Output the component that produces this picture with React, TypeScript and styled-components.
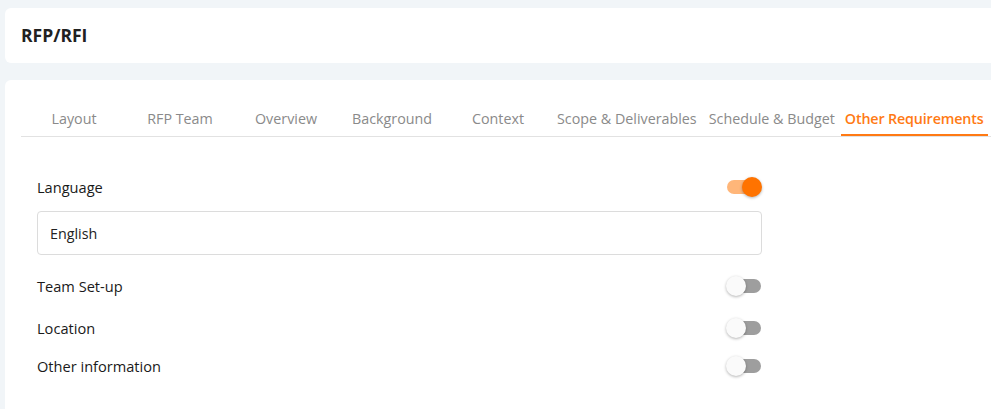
import styled, { createGlobalStyle } from "styled-components";

const GlobalStyle = createGlobalStyle`
  html, body {
    margin: 0;
    padding: 0;
    background: #f1f5f8;
    overflow: hidden;
  }
  body {
    font-family: "Open Sans", "Liberation Sans", sans-serif;
  }
`;

const TABS = [
  "Layout",
  "RFP Team",
  "Overview",
  "Background",
  "Context",
  "Scope & Deliverables",
  "Schedule & Budget",
  "Other Requirements",
];

const ACTIVE_TAB = "Other Requirements";

export default function App() {
  return (
    <>
      <GlobalStyle />
      <Page>
        <HeaderCard>
          <Title>RFP/RFI</Title>
        </HeaderCard>
        <ContentCard>
          <TabList>
            {TABS.map((tab) => (
              <Tab key={tab} $active={tab === ACTIVE_TAB}>
                {tab}
              </Tab>
            ))}
          </TabList>
          <Form>
            <Row $mt="38px">
              <Label>Language</Label>
              <Switch checked />
            </Row>
            <Input defaultValue="English" />
            <Row $mt="19px">
              <Label>Team Set-up</Label>
              <Switch />
            </Row>
            <Row $mt="18px">
              <Label>Location</Label>
              <Switch />
            </Row>
            <Row $mt="14px">
              <Label>Other information</Label>
              <Switch />
            </Row>
          </Form>
        </ContentCard>
      </Page>
    </>
  );
}

function Switch({ checked = false }: { checked?: boolean }) {
  return (
    <SwitchRoot>
      <Track $on={checked} />
      <Thumb $on={checked} />
    </SwitchRoot>
  );
}

const Page = styled.div`
  width: 1100px;
  padding: 8px 0 0 5px;
  display: flex;
  flex-direction: column;
  gap: 17px;
`;

const HeaderCard = styled.div`
  height: 55px;
  background: #ffffff;
  border-radius: 6px;
  padding: 0 16px;
  display: flex;
  align-items: center;
`;

const Title = styled.div`
  font-size: 17.5px;
  font-weight: 700;
  color: #212121;
  margin-top: -1px;
`;

const ContentCard = styled.div`
  background: #ffffff;
  border-radius: 6px;
  padding: 19px 16px 40px;
  min-height: 320px;
`;

const TabList = styled.div`
  display: flex;
  border-bottom: 1px solid #e2e2e2;
`;

const Tab = styled.div<{ $active: boolean }>`
  min-width: 106px;
  box-sizing: border-box;
  padding: ${({ $active }) => ($active ? "10px 4px 7px" : "10px 6px 7px")};
  font-size: 14.3px;
  line-height: 20px;
  text-align: center;
  white-space: nowrap;
  color: ${({ $active }) => ($active ? "#ff7a14" : "#8a8a8a")};
  font-weight: ${({ $active }) => ($active ? 600 : 400)};
  letter-spacing: ${({ $active }) => ($active ? "-0.15px" : "0")};
  box-shadow: ${({ $active }) => ($active ? "inset 0 -2px 0 #ff7a14" : "none")};
  cursor: pointer;
`;

const Form = styled.div`
  width: 725px;
  padding-left: 16px;
  display: flex;
  flex-direction: column;
`;

const Row = styled.div<{ $mt: string }>`
  margin-top: ${({ $mt }) => $mt};
  height: 24px;
  display: flex;
  align-items: center;
  justify-content: space-between;
`;

const Label = styled.div`
  font-size: 14.6px;
  color: #1a1a1a;
`;

const Input = styled.input`
  margin-top: 12px;
  height: 44px;
  box-sizing: border-box;
  border: 1px solid #dcdcdc;
  border-radius: 4px;
  padding: 0 12px;
  font-family: "Open Sans", "Liberation Sans", sans-serif;
  font-size: 14.3px;
  color: #222222;
  outline: none;
`;

const SwitchRoot = styled.div`
  position: relative;
  width: 36px;
  height: 20px;
  flex-shrink: 0;
`;

const Track = styled.div<{ $on: boolean }>`
  position: absolute;
  left: 1px;
  right: 1px;
  top: 3px;
  height: 14px;
  border-radius: 7px;
  background: ${({ $on }) => ($on ? "#ffb679" : "#9e9e9e")};
`;

const Thumb = styled.div<{ $on: boolean }>`
  position: absolute;
  top: 0;
  left: ${({ $on }) => ($on ? "16px" : "0")};
  width: 20px;
  height: 20px;
  border-radius: 50%;
  background: ${({ $on }) => ($on ? "#ff7300" : "#fafafa")};
  box-shadow: 0 1px 3px rgba(0, 0, 0, 0.3);
`;
